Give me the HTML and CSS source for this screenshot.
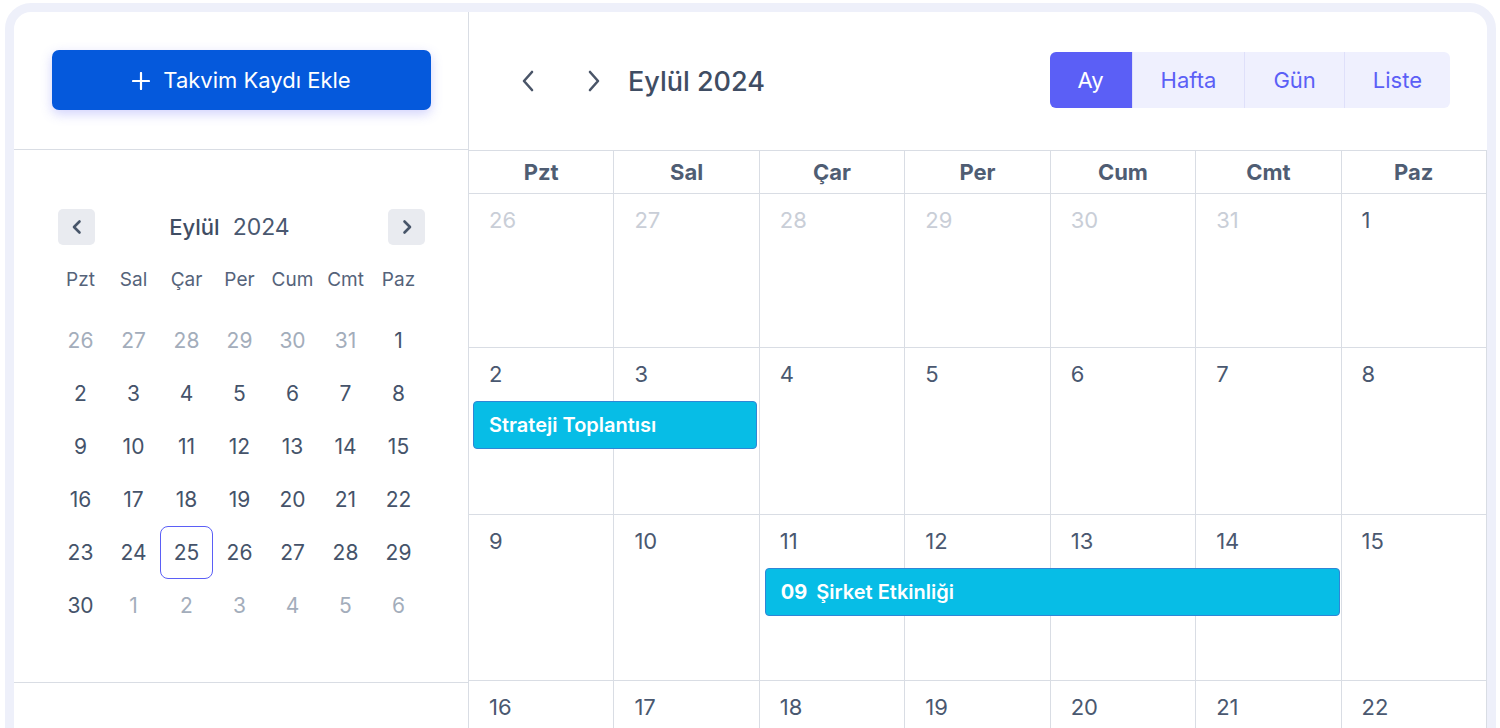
FILE: index.html
```html
<!DOCTYPE html>
<html lang="tr">
<head>
<meta charset="utf-8">
<title>Takvim</title>
<link rel="stylesheet" href="styles.css">
</head>
<body>

<div class="frame">
<div class="app">

  <!-- sidebar -->
  <aside class="side">
    <div class="side-top">
      <button class="add-btn">
        <svg class="plus" width="18" height="18" viewBox="0 0 18 18"><path d="M9 1v16M1 9h16" stroke="#fff" stroke-width="2.2" stroke-linecap="round"/></svg>
        <span>Takvim Kaydı Ekle</span>
      </button>
    </div>

    <div class="mini">
      <div class="mini-head">
        <button class="mini-nav"><svg width="12" height="16" viewBox="0 0 12 16"><path d="M8.5 2.5L3 8l5.5 5.5" fill="none" stroke="#475569" stroke-width="2.6" stroke-linecap="round" stroke-linejoin="round"/></svg></button>
        <div class="mini-title"><span class="mini-month">Eylül</span><span class="mini-year">2024</span></div>
        <button class="mini-nav"><svg width="12" height="16" viewBox="0 0 12 16"><path d="M3.5 2.5L9 8l-5.5 5.5" fill="none" stroke="#475569" stroke-width="2.6" stroke-linecap="round" stroke-linejoin="round"/></svg></button>
      </div>

      <div class="mini-dow">
        <span>Pzt</span><span>Sal</span><span>Çar</span><span>Per</span><span>Cum</span><span>Cmt</span><span>Paz</span>
      </div>

      <div class="mini-days">
        <span class="off">26</span><span class="off">27</span><span class="off">28</span><span class="off">29</span><span class="off">30</span><span class="off">31</span><span>1</span>
        <span>2</span><span>3</span><span>4</span><span>5</span><span>6</span><span>7</span><span>8</span>
        <span>9</span><span>10</span><span>11</span><span>12</span><span>13</span><span>14</span><span>15</span>
        <span>16</span><span>17</span><span>18</span><span>19</span><span>20</span><span>21</span><span>22</span>
        <span>23</span><span>24</span><span class="sel">25</span><span>26</span><span>27</span><span>28</span><span>29</span>
        <span>30</span><span class="off">1</span><span class="off">2</span><span class="off">3</span><span class="off">4</span><span class="off">5</span><span class="off">6</span>
      </div>
    </div>

    <div class="side-rest"></div>
  </aside>

  <!-- month view -->
  <main class="main">
    <div class="toolbar">
      <button class="nav"><svg width="16" height="24" viewBox="0 0 16 24"><path d="M12 3L4 12l8 9" fill="none" stroke="#4a5568" stroke-width="2.6" stroke-linecap="round" stroke-linejoin="round"/></svg></button>
      <button class="nav"><svg width="16" height="24" viewBox="0 0 16 24"><path d="M4 3l8 9-8 9" fill="none" stroke="#4a5568" stroke-width="2.6" stroke-linecap="round" stroke-linejoin="round"/></svg></button>
      <h1 class="title">Eylül 2024</h1>
      <div class="views">
        <button class="view active">Ay</button>
        <button class="view">Hafta</button>
        <button class="view">Gün</button>
        <button class="view">Liste</button>
      </div>
    </div>

    <div class="dow">
      <div>Pzt</div><div>Sal</div><div>Çar</div><div>Per</div><div>Cum</div><div>Cmt</div><div>Paz</div>
    </div>

    <div class="week w1">
      <div class="cell off">26</div><div class="cell off">27</div><div class="cell off">28</div><div class="cell off">29</div><div class="cell off">30</div><div class="cell off">31</div><div class="cell">1</div>
    </div>

    <div class="week w2">
      <div class="cell">2</div><div class="cell">3</div><div class="cell">4</div><div class="cell">5</div><div class="cell">6</div><div class="cell">7</div><div class="cell">8</div>
      <div class="event ev-strateji">Strateji Toplantısı</div>
    </div>

    <div class="week w3">
      <div class="cell">9</div><div class="cell">10</div><div class="cell">11</div><div class="cell">12</div><div class="cell">13</div><div class="cell">14</div><div class="cell">15</div>
      <div class="event ev-sirket"><span class="ev-time">09</span>Şirket Etkinliği</div>
    </div>

    <div class="week w4">
      <div class="cell">16</div><div class="cell">17</div><div class="cell">18</div><div class="cell">19</div><div class="cell">20</div><div class="cell">21</div><div class="cell">22</div>
    </div>
  </main>

</div>
</div>

</body>
</html>
```

FILE: styles.css
```css
* { box-sizing: border-box; }

body {
  margin: 0;
  background: #fff;
  font-family: Inter, "Noto Sans", sans-serif;
  color: #475569;
  overflow: hidden;
}

button { font-family: inherit; border: 0; background: none; padding: 0; cursor: pointer; }

.frame {
  margin: 3px 0 0 5px;
  width: 1491px;
  height: 860px;
  border: 9px solid #eef0fa;
  border-radius: 26px;
  background: #fff;
  overflow: hidden;
}

.app { display: flex; height: 100%; }

/* sidebar */
.side {
  width: 455px;
  flex: none;
  border-right: 1px solid #d9dde4;
  display: flex;
  flex-direction: column;
}

.side-top {
  flex: none;
  height: 138px;
  padding: 38px 37px 0 38px;
  border-bottom: 1px solid #d9dde4;
}

.add-btn {
  width: 379px;
  height: 60px;
  border-radius: 7px;
  background: #0559dc;
  color: #fff;
  font-size: 22px;
  display: flex;
  align-items: center;
  justify-content: center;
  gap: 13px;
  box-shadow: 0 4px 12px rgba(91, 95, 246, 0.28);
}
.add-btn .plus { margin-top: 1px; }

.mini {
  flex: none;
  height: 533px;
  border-bottom: 1px solid #d9dde4;
  padding: 59px 0 0 40px;
}

.mini-head {
  width: 372px;
  padding: 0 1px 0 4px;
  display: flex;
  align-items: center;
}

.mini-nav {
  width: 37px;
  height: 36px;
  border-radius: 5px;
  background: #e9ebf0;
  display: flex;
  align-items: center;
  justify-content: center;
}

.mini-title {
  flex: 1;
  display: flex;
  justify-content: center;
  align-items: baseline;
  gap: 13px;
  padding-right: 24px;
}
.mini-month { font-size: 22px; font-weight: 500; color: #3f4d63; }
.mini-year { font-size: 23px; color: #4a5870; }

.mini-dow, .mini-days {
  display: grid;
  grid-template-columns: repeat(7, 53px);
}
.mini-dow { margin-top: 14px; height: 40px; align-items: center; }
.mini-dow span { text-align: center; font-size: 19px; color: #55637a; }

.mini-days { margin-top: 15px; grid-auto-rows: 53px; }
.mini-days span {
  display: flex;
  align-items: center;
  justify-content: center;
  font-size: 21px;
  color: #45536a;
  border-radius: 8px;
}
.mini-days .off { color: #a3adbb; }
.mini-days .sel { border: 1.5px solid #5b5ff6; }

.side-rest { flex: 1; }

/* main */
.main { flex: 1; display: flex; flex-direction: column; }
.main > * { flex: none; }

.toolbar {
  height: 138px;
  display: flex;
  align-items: center;
  padding: 0 37px 0 38px;
}

.nav {
  width: 42px;
  height: 40px;
  display: flex;
  align-items: center;
  justify-content: center;
}
.nav + .nav { margin-left: 24px; }

.title {
  margin: 0 0 0 13px;
  font-size: 27px;
  font-weight: 500;
  color: #3f4d63;
  flex: 1;
}

.views { display: flex; border-radius: 6px; overflow: hidden; height: 56px; margin-top: -2px; }
.view {
  padding: 0 28px;
  font-size: 22px;
  color: #5b5ff6;
  background: #eff0fe;
  border-left: 1px solid #dfe0fa;
}
.view:first-child { border-left: 0; }
.view.active { background: #5b5ff6; color: #fff; }

.dow {
  display: grid;
  grid-template-columns: repeat(7, 1fr);
  border-top: 1px solid #d9dde4;
}
.dow div {
  height: 43px;
  border-right: 1px solid #d9dde4;
  border-bottom: 1px solid #d9dde4;
  display: flex;
  align-items: center;
  justify-content: center;
  font-size: 22px;
  font-weight: 700;
  color: #4f5d73;
}

.week {
  display: grid;
  grid-template-columns: repeat(7, 1fr);
  grid-template-rows: 53px 48px 1fr;
}
.w1 { height: 154px; }
.w2 { height: 167px; }
.w3 { height: 166px; }
.w4 { height: 160px; }

.cell {
  grid-row: 1 / 4;
  border-right: 1px solid #d9dde4;
  border-bottom: 1px solid #d9dde4;
  padding: 13px 0 0 20px;
  font-size: 22px;
  color: #4a5870;
}
.cell:nth-child(1) { grid-column: 1; }
.cell:nth-child(2) { grid-column: 2; }
.cell:nth-child(3) { grid-column: 3; }
.cell:nth-child(4) { grid-column: 4; }
.cell:nth-child(5) { grid-column: 5; }
.cell:nth-child(6) { grid-column: 6; }
.cell:nth-child(7) { grid-column: 7; }
.cell.off { color: #c9ced7; }

.event {
  grid-row: 2;
  background: #07bde6;
  border: 1px solid #2f86d6;
  border-radius: 4px;
  color: #fff;
  font-size: 20px;
  font-weight: 600;
  display: flex;
  align-items: center;
  padding-left: 15px;
}
.ev-strateji { grid-column: 1 / 3; margin: 0 3px 0 4px; }
.ev-sirket { grid-column: 3 / 7; margin: 0 2px 0 5px; }
.ev-time { font-weight: 700; margin-right: 9px; }
```
